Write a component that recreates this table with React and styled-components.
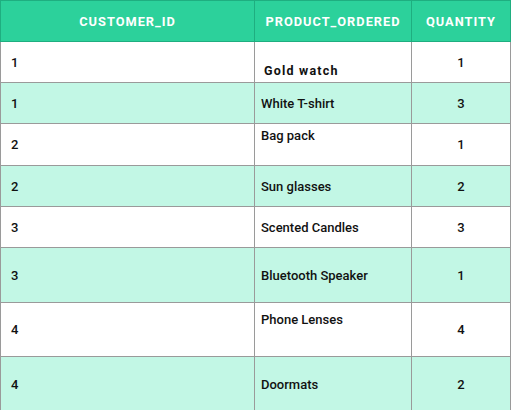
import React from 'react';
import styled, { createGlobalStyle } from 'styled-components';

const rows = [
  { id: 1, product: 'Gold watch', qty: 1, tint: false, height: 41, place: 'bottom', spaced: true },
  { id: 1, product: 'White T-shirt', qty: 3, tint: true, height: 41 },
  { id: 2, product: 'Bag pack', qty: 1, tint: false, height: 42, place: 'top', pad: 4 },
  { id: 2, product: 'Sun glasses', qty: 2, tint: true, height: 41 },
  { id: 3, product: 'Scented Candles', qty: 3, tint: false, height: 41 },
  { id: 3, product: 'Bluetooth Speaker', qty: 1, tint: true, height: 55 },
  { id: 4, product: 'Phone Lenses', qty: 4, tint: false, height: 54, place: 'top', pad: 9 },
  { id: 4, product: 'Doormats', qty: 2, tint: true, height: 55 },
];

const App = () => {
  return (
    <>
      <GlobalStyle />
      <Table>
        <colgroup>
          <col style={{ width: 254 }} />
          <col style={{ width: 157 }} />
          <col style={{ width: 99 }} />
        </colgroup>
        <thead>
          <tr>
            <HeadCell>CUSTOMER_ID</HeadCell>
            <HeadCell>PRODUCT_ORDERED</HeadCell>
            <HeadCell>QUANTITY</HeadCell>
          </tr>
        </thead>
        <tbody>
          {rows.map((row, i) => (
            <Row key={i} $tint={row.tint} style={{ height: row.height }}>
              <IdCell>{row.id}</IdCell>
              <ProductCell $place={row.place} $pad={row.pad} $spaced={row.spaced}>
                {row.product}
              </ProductCell>
              <QtyCell>{row.qty}</QtyCell>
            </Row>
          ))}
        </tbody>
      </Table>
    </>
  );
};

const GlobalStyle = createGlobalStyle`
  body {
    margin: 0;
    background: #ffffff;
    font-family: Roboto, "Liberation Sans", sans-serif;
  }
`;

const Table = styled.table`
  width: 510px;
  table-layout: fixed;
  border-collapse: collapse;
  color: #111;
`;

const HeadCell = styled.th`
  height: 40px;
  padding: 0;
  background: #2cd19b;
  border: 1px solid #1fae80;
  color: #fff;
  font-size: 12.8px;
  font-weight: 700;
  letter-spacing: 1px;
  text-align: center;
  vertical-align: middle;
`;

const Row = styled.tr`
  background: ${(p) => (p.$tint ? '#c2f7e5' : '#ffffff')};
`;

const Cell = styled.td`
  padding: 0;
  border: 1px solid #9a9a9a;
  font-size: 13px;
  font-weight: 500;
  vertical-align: middle;
`;

const IdCell = styled(Cell)`
  padding-left: 10px;
`;

const ProductCell = styled(Cell)`
  padding-left: ${(p) => (p.$spaced ? '9px' : '6px')};
  vertical-align: ${(p) => p.$place || 'middle'};
  padding-top: ${(p) => (p.$pad ? `${p.$pad}px` : '0')};
  padding-bottom: ${(p) => (p.$place === 'bottom' ? '4px' : '0')};
  letter-spacing: ${(p) => (p.$spaced ? '1.2px' : 'normal')};
  font-size: ${(p) => (p.$spaced ? '12.5px' : '13px')};
  font-weight: ${(p) => (p.$spaced ? 700 : 500)};
`;

const QtyCell = styled(Cell)`
  text-align: center;
`;

export default App;
